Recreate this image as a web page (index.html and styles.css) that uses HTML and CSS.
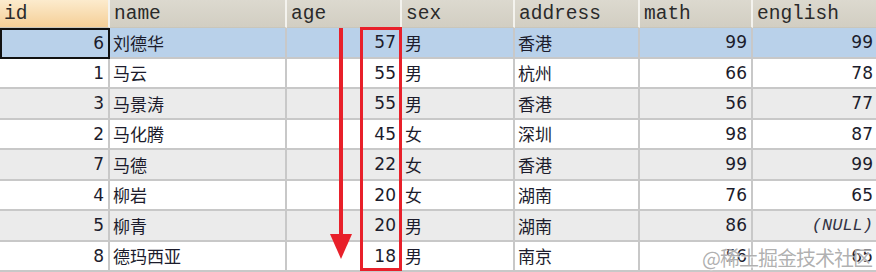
FILE: index.html
```html
<!DOCTYPE html>
<html>
<head>
<meta charset="utf-8">
<link rel="stylesheet" href="styles.css">
</head>
<body>
<div class="wrap">
  <div class="grid">
    <div class="hd hd-sel">id</div>
    <div class="hd">name</div>
    <div class="hd">age</div>
    <div class="hd">sex</div>
    <div class="hd">address</div>
    <div class="hd">math</div>
    <div class="hd last">english</div>

    <div class="c n sel cur">6</div><div class="c t sel">刘德华</div><div class="c n sel">57</div><div class="c t sel">男</div><div class="c t sel">香港</div><div class="c n sel">99</div><div class="c n sel last">99</div>
    <div class="c n">1</div><div class="c t">马云</div><div class="c n">55</div><div class="c t">男</div><div class="c t">杭州</div><div class="c n">66</div><div class="c n last">78</div>
    <div class="c n alt">3</div><div class="c t alt">马景涛</div><div class="c n alt">55</div><div class="c t alt">男</div><div class="c t alt">香港</div><div class="c n alt">56</div><div class="c n alt last">77</div>
    <div class="c n">2</div><div class="c t">马化腾</div><div class="c n">45</div><div class="c t">女</div><div class="c t">深圳</div><div class="c n">98</div><div class="c n last">87</div>
    <div class="c n alt">7</div><div class="c t alt">马德</div><div class="c n alt">22</div><div class="c t alt">女</div><div class="c t alt">香港</div><div class="c n alt">99</div><div class="c n alt last">99</div>
    <div class="c n">4</div><div class="c t">柳岩</div><div class="c n">20</div><div class="c t">女</div><div class="c t">湖南</div><div class="c n">76</div><div class="c n last">65</div>
    <div class="c n alt">5</div><div class="c t alt">柳青</div><div class="c n alt">20</div><div class="c t alt">男</div><div class="c t alt">湖南</div><div class="c n alt">86</div><div class="c n alt null last">(NULL)</div>
    <div class="c n">8</div><div class="c t">德玛西亚</div><div class="c n">18</div><div class="c t">男</div><div class="c t">南京</div><div class="c n">56</div><div class="c n last">65</div>
  </div>

  <div class="redbox"></div>
  <svg class="arrow" width="30" height="236" viewBox="0 0 30 236">
    <rect x="9" y="0" width="4" height="212" fill="#e8202a"/>
    <polygon points="0,206 22,206 11,231" fill="#e8202a"/>
  </svg>
  <div class="watermark">@稀土掘金技术社区</div>
</div>
</body>
</html>
```

FILE: styles.css
```css
html, body {
  margin: 0;
  padding: 0;
  background: #ffffff;
  overflow: hidden;
}

.wrap {
  position: relative;
  width: 876px;
  height: 272px;
  overflow: hidden;
}

.grid {
  display: grid;
  grid-template-columns: 110px 177px 115px 113px 125px 113px 123px;
  grid-template-rows: 28px repeat(8, 30.5px);
  width: 876px;
}

.hd {
  font-family: "Liberation Mono", "Courier New", monospace;
  font-size: 19.5px;
  color: #2a2a2a;
  background: linear-gradient(#dcd9cf, #d2cec2);
  border-right: 2px solid #f4f3ee;
  border-bottom: 1px solid #c9c6bb;
  padding: 0 4px;
  line-height: 28px;
  box-sizing: border-box;
  white-space: nowrap;
  overflow: hidden;
}

.hd-sel {
  background: linear-gradient(#fcebcd, #f5cf97);
}

.c {
  box-sizing: border-box;
  border-right: 2px solid #c8c8c8;
  border-bottom: 2px solid #c8c8c8;
  background: #ffffff;
  color: #1c1c2c;
  white-space: nowrap;
  overflow: hidden;
  display: flex;
  align-items: center;
  padding: 0 4px 0 3px;
}

.hd.last, .c.last {
  border-right: none;
}

.alt { background: #ebebeb; }
.sel { background: #b9d1ea; }

.cur {
  border: 2px solid #111111;
}

.n {
  justify-content: flex-end;
  font-family: "DejaVu Sans", Verdana, sans-serif;
  font-size: 17px;
  padding-right: 4px;
}

.c.n.last {
  padding-right: 3px;
}

.t {
  font-family: "Noto Sans CJK SC", "DejaVu Sans", sans-serif;
  font-size: 17px;
}

.c.null {
  font-family: "Liberation Mono", "Courier New", monospace;
  font-style: italic;
  font-size: 17px;
  color: #333344;
}

.redbox {
  position: absolute;
  left: 360px;
  top: 27px;
  width: 42px;
  height: 244px;
  box-sizing: border-box;
  border: 3px solid #e8202a;
}

.arrow {
  position: absolute;
  left: 330px;
  top: 28px;
}

.watermark {
  position: absolute;
  left: 702px;
  top: 243px;
  font-family: "Noto Sans CJK SC", sans-serif;
  font-size: 20px;
  color: rgba(110, 110, 110, 0.55);
  text-shadow: 0 0 1px #ffffff, 1px 1px 0 rgba(255,255,255,0.7);
  white-space: nowrap;
  letter-spacing: -1px;
}
```
